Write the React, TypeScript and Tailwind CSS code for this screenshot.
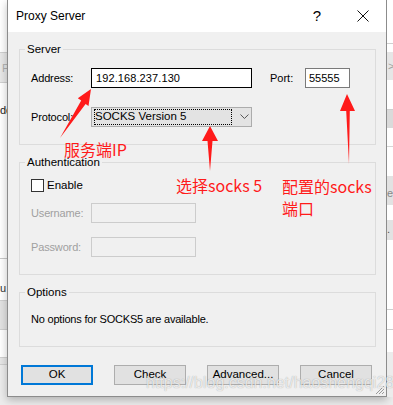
import React from "react";

const font = "font-['Liberation_Sans',Arial,sans-serif]";

const Legend = ({ children }: { children: React.ReactNode }) => (
  <legend className="-ml-[6px] px-[2px] text-[11.5px] leading-[14px] text-black">{children}</legend>
);

const LeftStrip = () => (
  <div className="w-[7px] flex flex-col overflow-hidden text-[11px] leading-[14px]">
    <div className="h-[52px] bg-white" />
    <div className="h-[31px] border-y border-[#d0d0d0] bg-[#e8e8e8] text-[#b0b0b0] pl-[2px] pt-[8px]">P</div>
    <div className="h-[175px] bg-white text-[#222] pt-[20px] whitespace-nowrap">dd</div>
    <div className="h-[42px] border-t border-[#c8c8c8] bg-white text-[#333] pt-[22px] whitespace-nowrap">u d</div>
    <div className="h-[30px] border-y border-[#cfcfcf] bg-[#e2e2e2]" />
    <div className="h-[27px] bg-white" />
    <div className="h-[8px] border-y border-[#cfcfcf] bg-[#e6e6e6]" />
    <div className="flex-1 bg-[#ececec]" />
  </div>
);

const RightStrip = () => (
  <div className="flex-1 flex flex-col overflow-hidden text-[11px] leading-[14px]">
    <div className="h-[44px] bg-white border-b border-[#d0d0d0]" />
    <div className="h-[8px] bg-white" />
    <div className="h-[28px] bg-[#e6e6e6] text-[#a0a0a0] pl-[1px] pt-[7px]">&gt;</div>
    <div className="h-[30px] bg-white border-b border-[#cfcfcf]" />
    <div className="h-[18px] bg-[#dadada]" />
    <div className="h-[19px] bg-white border-b border-[#d6d6d6]" />
    <div className="h-[29px] bg-white" />
    <div className="h-[29px] bg-[#e2e2e2] text-[#888] pt-[10px]">e</div>
    <div className="h-[15px] bg-white" />
    <div className="h-[20px] bg-[#e2e2e2] text-[#555] pt-[2px]">.</div>
    <div className="h-[70px] bg-white border-b border-[#cfcfcf]" />
    <div className="h-[20px] bg-white border-b border-[#cfcfcf]" />
    <div className="h-[22px] bg-white" />
    <div className="flex-1 bg-[#ececec]" />
  </div>
);

const Button = ({ label, primary }: { label: string; primary?: boolean }) => (
  <div
    className={
      "w-[72px] h-[20px] flex items-center justify-center bg-[#e1e1e1] text-[11.5px] text-black " +
      (primary ? "border-2 border-[#0078d7]" : "border border-[#adadad]")
    }
  >
    {label}
  </div>
);

const Dialog = () => (
  <div className="w-[380px] flex flex-col border-x border-b border-[#8c8c8c] bg-[#f0f0f0] shadow-[0_3px_8px_rgba(0,0,0,0.25)]">
    {/* title bar */}
    <div className="h-[32px] bg-white flex items-center pl-[8px]">
      <span className="text-[12px] text-black flex-1">Proxy Server</span>
      <span className="text-[15px] text-black w-[16px] text-center mr-[32px]">?</span>
      <svg width="12" height="12" viewBox="0 0 12 12" className="mr-[17px]">
        <path d="M0.5 0.5 L11.5 11.5 M11.5 0.5 L0.5 11.5" stroke="#111" strokeWidth="1" />
      </svg>
    </div>

    <div className="flex flex-col pl-[11px] pt-[10px]">
      {/* Server */}
      <fieldset className="w-[357px] border border-[#dcdcdc] pl-[11px] pt-[12px] pb-[17px]">
        <Legend>Server</Legend>
        <div className="flex items-center h-[20px]">
          <span className="w-[60px] text-[11px] tracking-[-0.15px]">Address:</span>
          <div className="w-[161px] h-[20px] border border-black bg-white flex items-center pl-[4px] text-[11px] tracking-[0.1px]">
            192.168.237.130
          </div>
          <span className="ml-[18px] w-[35px] text-[11px]">Port:</span>
          <div className="w-[45px] h-[20px] border border-[#7a7a7a] bg-white flex items-center pl-[3px] text-[11px]">
            55555
          </div>
        </div>
        <div className="flex items-center h-[20px] mt-[19px]">
          <span className="w-[60px] text-[11px] tracking-[-0.15px]">Protocol:</span>
          <div className="w-[161px] h-[20px] border border-[#acacac] bg-[#e3e3e3] flex items-center px-[2px]">
            <div className="w-[139px] h-[16px] border border-dotted border-black flex items-center text-[11.5px] leading-none">
              SOCKS Version 5
            </div>
            <svg width="9" height="6" viewBox="0 0 9 6" className="ml-[8px]">
              <path d="M0.5 0.5 L4.5 4.5 L8.5 0.5" stroke="#555" strokeWidth="1" fill="none" />
            </svg>
          </div>
        </div>
      </fieldset>

      {/* Authentication */}
      <fieldset className="w-[357px] border border-[#dcdcdc] pl-[11px] pt-[10px] pb-[17px] mt-[10px]">
        <Legend>Authentication</Legend>
        <div className="flex items-center h-[13px]">
          <div className="w-[13px] h-[13px] border border-[#333] bg-white" />
          <span className="ml-[3px] text-[11.5px]">Enable</span>
        </div>
        <div className="flex items-center h-[20px] mt-[11px]">
          <span className="w-[60px] text-[11px] text-[#a0a0a0] tracking-[-0.15px]">Username:</span>
          <div className="w-[105px] h-[20px] border border-[#cccccc] bg-[#f0f0f0]" />
        </div>
        <div className="flex items-center h-[20px] mt-[14px]">
          <span className="w-[60px] text-[11px] text-[#a0a0a0] tracking-[-0.15px]">Password:</span>
          <div className="w-[105px] h-[20px] border border-[#cccccc] bg-[#f0f0f0]" />
        </div>
      </fieldset>

      {/* Options */}
      <fieldset className="w-[357px] border border-[#dcdcdc] pl-[11px] pt-[13px] pb-[20px] mt-[10px]">
        <Legend>Options</Legend>
        <div className="text-[11px] leading-[14px] tracking-[-0.2px]">No options for SOCKS5 are available.</div>
      </fieldset>
    </div>

    <div className="flex justify-between pl-[13px] pr-[14px] mt-[18px] mb-[11px]">
      <Button label="OK" primary />
      <Button label="Check" />
      <Button label="Advanced..." />
      <Button label="Cancel" />
    </div>
  </div>
);

export default function App() {
  return (
    <div className={"relative w-[393px] h-[405px] overflow-hidden bg-[#ececec] " + font}>
      <div className="flex h-[397px]">
        <LeftStrip />
        <Dialog />
        <RightStrip />
      </div>

      {/* annotation arrows */}
      <svg className="absolute left-0 top-0 pointer-events-none" width="393" height="405" viewBox="0 0 393 405">
        <polygon
          points="91,89 88.5,106 85.6,104 60,138 81.2,100.5 77.8,98.3"
          fill="#ff1a1a"
        />
        <polygon points="210,126 218,141 212.5,141 210,171 207.5,141 202,141" fill="#ff1a1a" />
        <polygon points="347,94 355,111 349.8,111 349,164 346.2,111 340,111" fill="#ff1a1a" />
        {/* resize grip */}
        <path d="M384 386 L376 394 M384 389 L379 394 M384 392 L382 394" stroke="#9a9a9a" strokeWidth="1" />
      </svg>

      {/* annotation text */}
      <div className="absolute left-[64px] top-[139px] text-[16px] leading-[20px] text-[#ff1a1a] font-['Noto_Sans_CJK_SC',sans-serif]">
        服务端IP
      </div>
      <div className="absolute left-[176px] top-[175px] text-[16px] leading-[20px] text-[#ff1a1a] font-['Noto_Sans_CJK_SC',sans-serif]">
        选择socks 5
      </div>
      <div className="absolute left-[282px] top-[175px] text-[16px] leading-[22px] text-[#ff1a1a] font-['Noto_Sans_CJK_SC',sans-serif]">
        配置的socks
        <br />
        端口
      </div>

      {/* watermark */}
      <div className="absolute left-[146px] top-[373px] text-[16px] leading-[20px] text-white/75 whitespace-nowrap [text-shadow:0_0_1px_rgba(0,0,0,0.35)] pointer-events-none">
        https://blog.csdn.net/haoshengqi28
      </div>
    </div>
  );
}
